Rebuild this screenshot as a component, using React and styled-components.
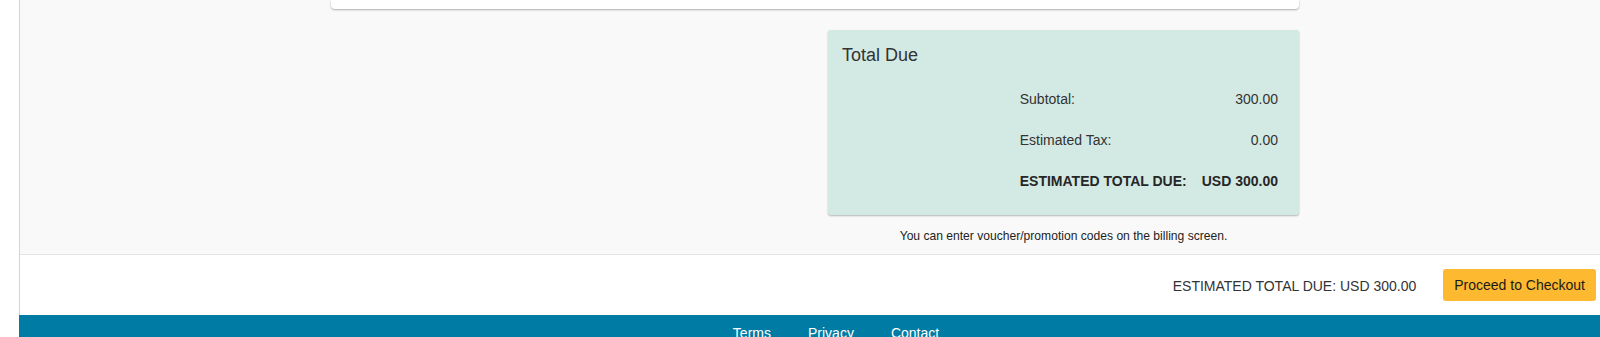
import React from 'react';
import styled, { createGlobalStyle } from 'styled-components';

const GlobalStyle = createGlobalStyle`
  html, body {
    margin: 0;
    padding: 0;
    background: #ffffff;
    font-family: "Liberation Sans", Arial, sans-serif;
    color: #333333;
  }
`;

const Page = styled.div`
  margin-left: 19px;
`;

const Shell = styled.div`
  border-left: 1px solid #d4d4d4;
  box-shadow: inset 2px 0 2px -1px rgba(0, 0, 0, 0.07);
`;

const Main = styled.main`
  height: 254px;
  background: #f9f9f9;
  border-bottom: 1px solid #e4e4e4;
  overflow: hidden;
`;

const Container = styled.div`
  width: 968px;
  margin-left: 311px;
`;

const TopCard = styled.div`
  height: 9px;
  background: #ffffff;
  border-radius: 0 0 4px 4px;
  box-shadow: 0 1px 2px rgba(0, 0, 0, 0.3);
`;

const Summary = styled.section`
  width: 471px;
  margin: 21px 0 0 auto;
`;

const TotalCard = styled.div`
  height: 185px;
  box-sizing: border-box;
  padding: 15px 21px 0 14px;
  background: #d3eae4;
  border-radius: 3px;
  box-shadow: 0 1px 2px rgba(0, 0, 0, 0.28);
`;

const CardTitle = styled.h2`
  margin: 0 0 24px;
  font-size: 18px;
  line-height: 20px;
  font-weight: normal;
  color: #333333;
`;

const Rows = styled.div`
  display: grid;
  grid-template-columns: auto auto;
  justify-content: end;
  column-gap: 15px;
  row-gap: 21px;
  font-size: 14px;
  line-height: 20px;
`;

const Label = styled.span`
  font-weight: ${(p) => (p.$strong ? 'bold' : 'normal')};
  color: ${(p) => (p.$strong ? '#262626' : '#333333')};
`;

const Value = styled(Label)`
  text-align: right;
`;

const Note = styled.p`
  margin: 13px 0 0;
  text-align: center;
  font-size: 12.1px;
  line-height: 16px;
  color: #222222;
`;

const CheckoutBar = styled.div`
  height: 60px;
  display: flex;
  justify-content: flex-end;
  align-items: center;
  gap: 27px;
  padding-right: 4px;
  background: #ffffff;
`;

const BarTotal = styled.span`
  font-size: 14px;
  color: #333333;
  padding-top: 2px;
`;

const CheckoutButton = styled.button`
  height: 32px;
  padding: 0 11px;
  border: 0;
  border-radius: 3px;
  background: #fdb92f;
  color: #1a1a1a;
  font-family: "Liberation Sans", Arial, sans-serif;
  font-size: 14px;
  cursor: pointer;
`;

const Footer = styled.footer`
  background: #007ba3;
  padding: 8px 0 20px 53px;
  display: flex;
  justify-content: center;
  gap: 37px;
`;

const FooterLink = styled.a`
  color: #ffffff;
  font-size: 14px;
  line-height: 20px;
  text-decoration: none;
`;

const rows = [
  { label: 'Subtotal:', value: '300.00' },
  { label: 'Estimated Tax:', value: '0.00' },
  { label: 'ESTIMATED TOTAL DUE:', value: 'USD 300.00', strong: true },
];

export default function App() {
  return (
    <Page>
      <GlobalStyle />
      <Shell>
        <Main>
          <Container>
            <TopCard />
            <Summary>
              <TotalCard>
                <CardTitle>Total Due</CardTitle>
                <Rows>
                  {rows.map((row) => (
                    <React.Fragment key={row.label}>
                      <Label $strong={row.strong}>{row.label}</Label>
                      <Value $strong={row.strong}>{row.value}</Value>
                    </React.Fragment>
                  ))}
                </Rows>
              </TotalCard>
              <Note>You can enter voucher/promotion codes on the billing screen.</Note>
            </Summary>
          </Container>
        </Main>
        <CheckoutBar>
          <BarTotal>ESTIMATED TOTAL DUE: USD 300.00</BarTotal>
          <CheckoutButton type="button">Proceed to Checkout</CheckoutButton>
        </CheckoutBar>
      </Shell>
      <Footer>
        <FooterLink href="#">Terms</FooterLink>
        <FooterLink href="#">Privacy</FooterLink>
        <FooterLink href="#">Contact</FooterLink>
      </Footer>
    </Page>
  );
}
